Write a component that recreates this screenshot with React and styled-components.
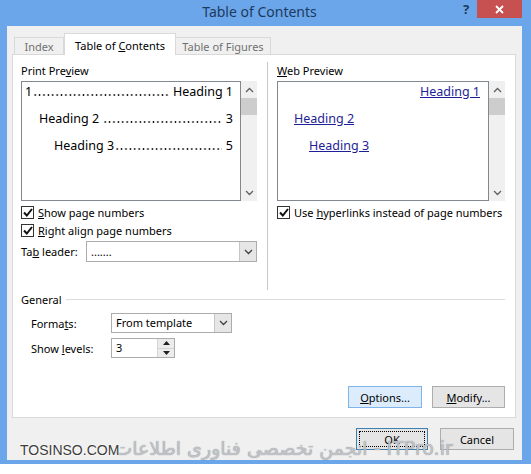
import React from 'react'
import styled, { createGlobalStyle } from 'styled-components'

const Global = createGlobalStyle`
  html, body {
    margin: 0;
    padding: 0;
    background: #ffffff;
  }
  body {
    font-family: "Noto Sans", "Open Sans", sans-serif;
    font-size: 11px;
    color: #000;
  }
`

const Window = styled.div`
  position: relative;
  width: 531px;
  height: 464px;
  background: #6aa6e9;
  display: flex;
  flex-direction: column;
  overflow: hidden;
`

const TitleBar = styled.div`
  height: 26px;
  display: flex;
  align-items: flex-start;
`

const Title = styled.div`
  flex: 1;
  text-align: center;
  font-size: 14px;
  line-height: 24px;
  color: #1d3a5e;
  padding-left: 56px;
`

const HelpBtn = styled.div`
  width: 14px;
  margin-top: 1px;
  font-weight: bold;
  font-size: 13px;
  color: #1d3a5e;
  line-height: 16px;
`

const CloseBtn = styled.div`
  width: 45px;
  height: 18px;
  margin: 0 9px 0 0;
  background: #c75050;
  display: flex;
  align-items: center;
  justify-content: center;
`

const Body = styled.div`
  margin: 0 9px 0 7px;
  height: 434px;
  background: #f0f0f0;
  display: flex;
  flex-direction: column;
  padding: 7px 8px 0 5px;
  box-sizing: border-box;
`

const Tabs = styled.div`
  display: flex;
  align-items: flex-end;
  padding-left: 2px;
  margin-bottom: -1px;
  position: relative;
  z-index: 1;
`

const Tab = styled.div`
  box-sizing: border-box;
  width: ${p => p.$w}px;
  height: ${p => (p.$active ? 22 : 18)}px;
  border: 1px solid #d9d9d9;
  border-bottom: ${p => (p.$active ? 'none' : '1px solid #d9d9d9')};
  margin-left: ${p => (p.$active ? 0 : -1)}px;
  background: ${p => (p.$active ? '#ffffff' : '#f0f0f0')};
  color: ${p => (p.$active ? '#000' : '#707070')};
  text-align: center;
  line-height: ${p => (p.$active ? 23 : 17)}px;
  &:first-child { margin-left: 0; }
`

const Panel = styled.div`
  box-sizing: border-box;
  width: 504px;
  height: 364px;
  background: #ffffff;
  border: 1px solid #d9d9d9;
  display: flex;
  flex-direction: column;
  padding: 7px 10px 9px 8px;
`

const Top = styled.div`
  display: flex;
  height: 228px;
`

const Column = styled.div`
  width: ${p => p.$w}px;
  display: flex;
  flex-direction: column;
`

const Separator = styled.div`
  width: 1px;
  background: #c8c8c8;
  margin: 0 9px 0 10px;
`

const Label = styled.div`
  height: 19px;
  line-height: 17px;
`

const Preview = styled.div`
  display: flex;
  height: 120px;
`

const PreviewBox = styled.div`
  flex: 1;
  box-sizing: border-box;
  border: 1px solid #828790;
  padding: 0 ${p => p.$pr}px 0 ${p => p.$pl}px;
  font-size: 12.5px;
  overflow: hidden;
`

const Line = styled.div`
  display: flex;
  height: 27px;
  line-height: 20px;
  padding-left: ${p => p.$indent || 0}px;
  white-space: nowrap;
`

const Leader = styled.span`
  flex: 1;
  margin: 0 ${p => p.$mr || 0}px 0 ${p => p.$ml || 0}px;
  background-image: radial-gradient(circle, #111 0.75px, transparent 1.1px);
  background-size: 4.4px 4px;
  background-repeat: repeat-x;
  background-position: 0 10.5px;
`

const WebLine = styled.div`
  height: 27px;
  line-height: 20px;
  padding-left: ${p => p.$indent || 0}px;
  text-align: ${p => p.$align || 'left'};
`

const Link = styled.span`
  color: #1e1e96;
  text-decoration: underline;
`

const Scrollbar = styled.div`
  width: 16px;
  background: #f0f0f0;
  display: flex;
  flex-direction: column;
  align-items: center;
`

const ArrowBox = styled.div`
  height: 17px;
  width: 16px;
  display: flex;
  align-items: center;
  justify-content: center;
`

const Thumb = styled.div`
  width: 16px;
  height: 17px;
  background: #cdcdcd;
`

const Spacer = styled.div`
  flex: 1;
`

const CheckRow = styled.label`
  display: flex;
  align-items: center;
  height: 18px;
  margin-top: ${p => p.$mt || 0}px;
  gap: 4px;
`

const Box = styled.span`
  width: 13px;
  height: 13px;
  box-sizing: border-box;
  border: 1px solid #333;
  background: #fff;
  display: flex;
  align-items: center;
  justify-content: center;
`

const FieldRow = styled.div`
  display: flex;
  align-items: center;
  margin-top: ${p => p.$mt || 0}px;
  padding-left: ${p => p.$pl || 0}px;
`

const FieldLabel = styled.div`
  width: ${p => p.$w}px;
`

const Select = styled.div`
  box-sizing: border-box;
  width: ${p => p.$w}px;
  height: ${p => p.$h}px;
  border: 1px solid #acacac;
  background: #fff;
  display: flex;
  align-items: stretch;
`

const SelectValue = styled.div`
  flex: 1;
  padding-left: 4px;
  line-height: ${p => p.$h - 2}px;
`

const SelectArrow = styled.div`
  width: 16px;
  background: #e6e6e6;
  border-left: 1px solid #c6c6c6;
  display: flex;
  align-items: center;
  justify-content: center;
`

const SpinButtons = styled.div`
  width: 16px;
  display: flex;
  flex-direction: column;
  border-left: 1px solid #d5d5d5;
`

const SpinHalf = styled.div`
  flex: 1;
  background: #ececec;
  display: flex;
  align-items: center;
  justify-content: center;
  & + & { border-top: 1px solid #d5d5d5; }
`

const GroupHeader = styled.div`
  display: flex;
  align-items: center;
  margin-top: 1px;
  gap: 4px;
  height: 17px;
`

const Rule = styled.div`
  flex: 1;
  height: 1px;
  background: #dcdcdc;
`

const ButtonRow = styled.div`
  display: flex;
  justify-content: flex-end;
  gap: ${p => p.$gap}px;
`

const Button = styled.div`
  box-sizing: border-box;
  width: ${p => p.$w}px;
  height: 22px;
  display: flex;
  align-items: center;
  justify-content: center;
  border: 1px solid ${p => (p.$hover ? '#7eb4ea' : p.$default ? '#3c7fb1' : '#adadad')};
  background: ${p => (p.$hover ? '#dcecfc' : '#e5e5e5')};
  position: relative;
`

const FocusRing = styled.span`
  position: absolute;
  inset: 2px;
  border: 1px dotted #000;
`

const Footer = styled.div`
  margin-top: 10px;
`

const Watermark = styled.div`
  position: absolute;
  left: 20px;
  top: 437px;
  display: flex;
  align-items: baseline;
  pointer-events: none;
  white-space: nowrap;
`

const Site = styled.span`
  font-family: "Liberation Sans", Arial, sans-serif;
  font-size: 14px;
  color: #3c3c3c;
  text-shadow: 0 0 2px #fff, 0 0 2px #fff;
  position: relative;
  z-index: 1;
`

const Persian = styled.span`
  font-family: "DejaVu Sans", sans-serif;
  font-size: 19px;
  color: rgba(200, 203, 210, 0.9);
  text-shadow: 0 0 1px #7a7a7a;
  margin-left: -5px;
  direction: ltr;
  unicode-bidi: embed;
`

const Up = () => (
  <svg width="9" height="6" viewBox="0 0 9 6"><path d="M1 5 L4.5 1.5 L8 5" fill="none" stroke="#606060" strokeWidth="1.3" /></svg>
)
const Down = ({ c = '#606060' }) => (
  <svg width="9" height="6" viewBox="0 0 9 6"><path d="M1 1 L4.5 4.5 L8 1" fill="none" stroke={c} strokeWidth="1.3" /></svg>
)
const Tri = ({ up }) => (
  <svg width="7" height="4" viewBox="0 0 7 4"><path d={up ? 'M0 4 L3.5 0 L7 4Z' : 'M0 0 L3.5 4 L7 0Z'} fill="#222" /></svg>
)

const Check = ({ children, mt }) => (
  <CheckRow $mt={mt}>
    <Box>
      <svg width="10" height="9" viewBox="0 0 10 9"><path d="M1 4.5 L3.8 7.5 L9 1" fill="none" stroke="#111" strokeWidth="2" /></svg>
    </Box>
    <span>{children}</span>
  </CheckRow>
)

const Scroll = () => (
  <Scrollbar>
    <ArrowBox><Up /></ArrowBox>
    <Thumb />
    <Spacer />
    <ArrowBox><Down /></ArrowBox>
  </Scrollbar>
)

export default function App() {
  return (
    <>
      <Global />
      <Window>
        <TitleBar>
          <Title>Table of Contents</Title>
          <HelpBtn>?</HelpBtn>
          <CloseBtn>
            <svg width="9" height="9" viewBox="0 0 9 9"><path d="M1 1 L8 8 M8 1 L1 8" stroke="#fff" strokeWidth="1.8" /></svg>
          </CloseBtn>
        </TitleBar>
        <Body>
          <Tabs>
            <Tab $w={50}>Index</Tab>
            <Tab $w={112} $active>Table of <u>C</u>ontents</Tab>
            <Tab $w={96}>Table of Figures</Tab>
          </Tabs>
          <Panel>
            <Top>
              <Column $w={236}>
                <Label>Print Pre<u>v</u>iew</Label>
                <Preview>
                  <PreviewBox $pl={3} $pr={7}>
                    <Line><span>1</span><Leader $ml={1} $mr={4} /><span>Heading 1</span></Line>
                    <Line $indent={14}><span>Heading 2</span><Leader $ml={4} $mr={4} /><span>3</span></Line>
                    <Line $indent={29}><span>Heading 3</span><Leader $ml={1} $mr={4} /><span>5</span></Line>
                  </PreviewBox>
                  <Scroll />
                </Preview>
                <Check mt={2}><u>S</u>how page numbers</Check>
                <Check><u>R</u>ight align page numbers</Check>
                <FieldRow $mt={2}>
                  <FieldLabel $w={65}>Ta<u>b</u> leader:</FieldLabel>
                  <Select $w={171} $h={21}>
                    <SelectValue $h={21}>.......</SelectValue>
                    <SelectArrow><Down c="#404040" /></SelectArrow>
                  </Select>
                </FieldRow>
              </Column>
              <Separator />
              <Column $w={228}>
                <Label><u>W</u>eb Preview</Label>
                <Preview>
                  <PreviewBox $pl={16} $pr={8}>
                    <WebLine $align="right"><Link>Heading 1</Link></WebLine>
                    <WebLine><Link>Heading 2</Link></WebLine>
                    <WebLine $indent={15}><Link>Heading 3</Link></WebLine>
                  </PreviewBox>
                  <Scroll />
                </Preview>
                <Check mt={2}>Use <u>h</u>yperlinks instead of page numbers</Check>
              </Column>
            </Top>
            <GroupHeader>
              <span>General</span>
              <Rule />
            </GroupHeader>
            <FieldRow $mt={5} $pl={10}>
              <FieldLabel $w={80}>Forma<u>t</u>s:</FieldLabel>
              <Select $w={121} $h={20}>
                <SelectValue $h={20}>From template</SelectValue>
                <SelectArrow><Down c="#404040" /></SelectArrow>
              </Select>
            </FieldRow>
            <FieldRow $mt={5} $pl={10}>
              <FieldLabel $w={80}>Show <u>l</u>evels:</FieldLabel>
              <Select $w={64} $h={20}>
                <SelectValue $h={20}>3</SelectValue>
                <SpinButtons>
                  <SpinHalf><Tri up /></SpinHalf>
                  <SpinHalf><Tri /></SpinHalf>
                </SpinButtons>
              </Select>
            </FieldRow>
            <Spacer />
            <ButtonRow $gap={10}>
              <Button $w={74} $hover><u>O</u>ptions...</Button>
              <Button $w={73}><u>M</u>odify...</Button>
            </ButtonRow>
          </Panel>
          <Footer>
            <ButtonRow $gap={12}>
              <Button $w={72} $default><FocusRing />OK</Button>
              <Button $w={74}>Cancel</Button>
            </ButtonRow>
          </Footer>
        </Body>
        <Watermark>
          <Site>TOSINSO.COM</Site>
          <Persian>انجمن تخصصی فناوری اطلاعات - ITPro.ir</Persian>
        </Watermark>
      </Window>
    </>
  )
}
